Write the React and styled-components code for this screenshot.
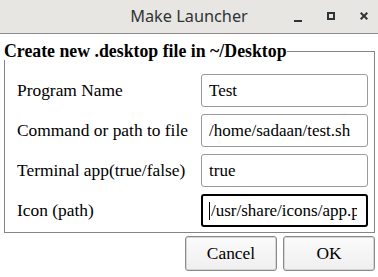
import React from "react";
import styled, { createGlobalStyle } from "styled-components";

const GlobalStyle = createGlobalStyle`
    html, body {
        margin: 0;
        padding: 0;
        background: #ffffff;
    }
    body {
        width: 378px;
        height: 277px;
        overflow: hidden;
        font-family: "Liberation Serif", "Times New Roman", serif;
    }
`;

const Window = styled.div`
    width: 378px;
    height: 277px;
    display: flex;
    flex-direction: column;
    background: #ffffff;
`;

const TitleBar = styled.div`
    height: 33px;
    flex: none;
    display: grid;
    grid-template-columns: 1fr auto 1fr;
    align-items: start;
    background: #e8e6e3;
    border-bottom: 1px solid #8e8c89;
`;

const Title = styled.div`
    grid-column: 2;
    padding-top: 6px;
    font-family: "Noto Sans", "Open Sans", sans-serif;
    font-size: 16.3px;
    line-height: 20px;
    color: #2e3436;
`;

const Controls = styled.div`
    grid-column: 3;
    justify-self: end;
    display: flex;
    gap: 25px;
    padding-top: 12px;
    padding-right: 10px;
`;

const ControlIcon = styled.svg`
    width: 8px;
    height: 10px;
    display: block;
`;

const Body = styled.div`
    flex: 1;
    display: flex;
    flex-direction: column;
    padding: 8px 3px 0 4px;
`;

const Frame = styled.fieldset`
    margin: 0;
    padding: 14px 6px 5px 12px;
    border: 1px solid #858585;
    min-width: 0;
    display: grid;
    grid-template-columns: 184px 167px;
    row-gap: 7px;
    align-items: center;
`;

const Legend = styled.legend`
    padding: 0;
    margin-left: -13px;
    font-weight: bold;
    font-size: 17.8px;
    line-height: 18px;
    color: #000;
`;

const FieldLabel = styled.label`
    font-size: 17.4px;
    color: #000;
    white-space: nowrap;
`;

const Field = styled.input`
    box-sizing: border-box;
    width: 167px;
    height: 33px;
    margin: 0;
    padding: 0 9px 0 ${p => (p.$focused ? "8px" : "7px")};
    border: ${p => (p.$focused ? "2px solid #000" : "1px solid #9a9a9a")};
    border-radius: 3px;
    background: #ffffff;
    font-family: "Liberation Serif", "Times New Roman", serif;
    font-size: 17px;
    color: #000;
    outline: none;
`;

const FieldWrap = styled.div`
    position: relative;
    height: 33px;

    &::before {
        content: "";
        position: absolute;
        left: 8px;
        top: 8px;
        width: 1px;
        height: 18px;
        background: #000;
        display: ${p => (p.$caret ? "block" : "none")};
    }
`;

const Actions = styled.div`
    display: flex;
    justify-content: flex-end;
    gap: 6px;
    margin-top: 3px;
`;

const Button = styled.button`
    box-sizing: border-box;
    width: 92px;
    height: 35px;
    margin: 0;
    padding: 0;
    border: 1px solid #8a8a8a;
    border-radius: 3px;
    background: linear-gradient(#fbfbfb, #efefef);
    box-shadow: inset 0 0 0 1px #d6d6d6;
    font-family: "Liberation Serif", "Times New Roman", serif;
    font-size: 17.4px;
    color: #000;
`;

const fields = [
    { label: "Program Name", value: "Test" },
    { label: "Command or path to file", value: "/home/sadaan/test.sh" },
    { label: "Terminal app(true/false)", value: "true" },
    { label: "Icon (path)", value: "/usr/share/icons/app.png", focused: true },
];

export default function App() {
    return <Window>
        <GlobalStyle />
        <TitleBar>
            <Title>Make Launcher</Title>
            <Controls>
                <ControlIcon viewBox="0 0 8 10">
                    <rect x="0" y="8" width="8" height="2" fill="#2e3436" />
                </ControlIcon>
                <ControlIcon viewBox="0 0 8 10">
                    <rect x="1" y="1" width="6" height="6" fill="none" stroke="#2e3436" strokeWidth="2" />
                </ControlIcon>
                <ControlIcon viewBox="0 0 8 10">
                    <path d="M0.7 0.7 L7.3 7.3 M7.3 0.7 L0.7 7.3" stroke="#2e3436" strokeWidth="2" />
                </ControlIcon>
            </Controls>
        </TitleBar>
        <Body>
            <Frame>
                <Legend>Create new .desktop file in ~/Desktop</Legend>
                {fields.map((f) => (
                    <React.Fragment key={f.label}>
                        <FieldLabel>{f.label}</FieldLabel>
                        <FieldWrap $caret={f.focused}>
                            <Field $focused={f.focused} defaultValue={f.value} readOnly />
                        </FieldWrap>
                    </React.Fragment>
                ))}
            </Frame>
            <Actions>
                <Button>Cancel</Button>
                <Button>OK</Button>
            </Actions>
        </Body>
    </Window>;
}
